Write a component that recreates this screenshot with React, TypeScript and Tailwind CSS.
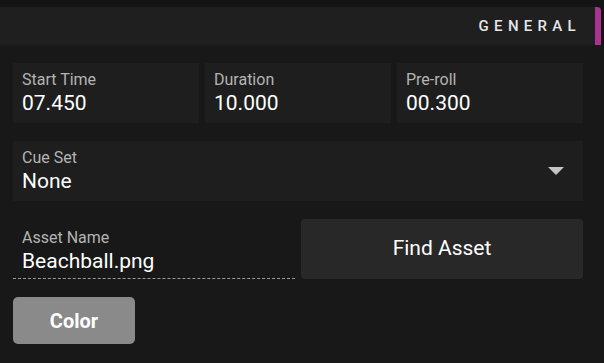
import React from 'react'

const font = { fontFamily: 'Roboto, "Liberation Sans", sans-serif' }

function Field({ label, value }: { label: string; value: string }) {
  return (
    <div className="h-[60px] bg-[#1e1e1e] pl-[9px] pt-[7px] flex flex-col">
      <span className="text-[16px] leading-[19px] text-[#b4b4b4]">{label}</span>
      <span className="text-[21px] leading-[29px] text-white">{value}</span>
    </div>
  )
}

export default function App() {
  return (
    <div className="w-[604px] h-[363px] bg-[#181818] overflow-hidden" style={font}>
      <div className="h-[7px] bg-[#141414]" />
      {/* Header */}
      <div className="flex h-[38px] bg-[#141414]">
        <div className="flex-1 bg-[#1f1f1f] flex items-center justify-end pr-[14px]">
          <span className="text-[15px] font-medium tracking-[5.3px] text-[#e6e6e6]">GENERAL</span>
        </div>
        <div className="w-[6px] bg-[#a8348f] rounded-tr-[4px]" />
        <div className="w-[3px]" />
      </div>

      <div className="w-[570px] ml-[13px] pt-[18px] flex flex-col gap-[18px]">
        <div className="grid grid-cols-3 gap-[6px]">
          <Field label="Start Time" value="07.450" />
          <Field label="Duration" value="10.000" />
          <Field label="Pre-roll" value="00.300" />
        </div>

        {/* Cue Set */}
        <div className="h-[60px] bg-[#1e1e1e] pl-[9px] pr-[19px] pt-[7px] flex items-start justify-between">
          <div className="flex flex-col">
            <span className="text-[16px] leading-[19px] text-[#b4b4b4]">Cue Set</span>
            <span className="text-[21px] leading-[29px] text-white">None</span>
          </div>
          <svg width="16" height="9" viewBox="0 0 16 9" className="mt-[19px]">
            <path d="M0 0 H16 L8 8 Z" fill="#c4c4c4" />
          </svg>
        </div>

        {/* Asset row */}
        <div className="grid grid-cols-2 gap-[6px]">
          <div className="h-[60px] border-b border-dashed border-[#9a9a9a] pl-[9px] pt-[9px] flex flex-col">
            <span className="text-[16px] leading-[19px] text-[#b4b4b4]">Asset Name</span>
            <span className="text-[21px] leading-[29px] text-white">Beachball.png</span>
          </div>
          <button className="h-[60px] bg-[#282828] rounded-[4px] text-[21px] text-white">Find Asset</button>
        </div>

        <button className="w-[122px] h-[47px] bg-[#8a8a8a] rounded-[5px] text-[20px] font-bold text-white">
          Color
        </button>
      </div>
    </div>
  )
}
